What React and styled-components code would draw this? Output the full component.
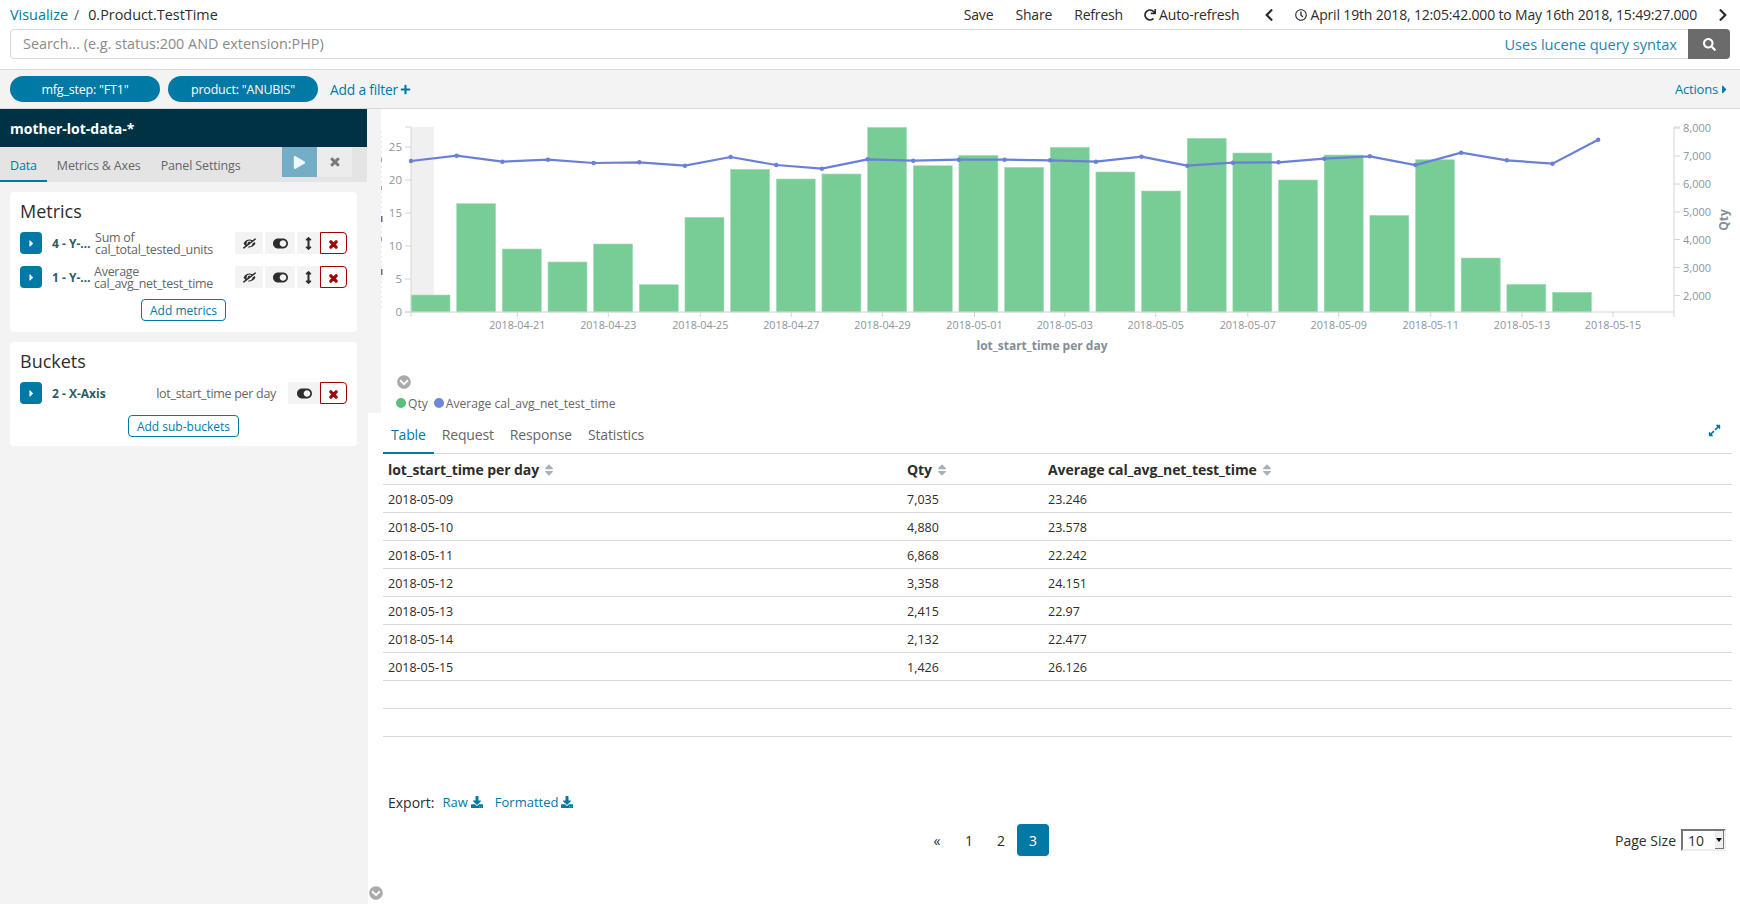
import React from "react"
import styled, { createGlobalStyle } from "styled-components"
import {
  FaArrowsAltV,
  FaCaretRight,
  FaChevronCircleDown,
  FaChevronLeft,
  FaChevronRight,
  FaDownload,
  FaExpandAlt,
  FaEyeSlash,
  FaPlay,
  FaPlus,
  FaRedo,
  FaRegClock,
  FaSearch,
  FaSort,
  FaTimes,
  FaToggleOn,
} from "react-icons/fa"

const GlobalStyle = createGlobalStyle`
  html, body { margin: 0; padding: 0; background: #fff; }
  body {
    font-family: "Open Sans", "Noto Sans", sans-serif;
    font-size: 14px;
    color: #2d2d2d;
    overflow: hidden;
  }
  * { box-sizing: border-box; }
`

const Page = styled.div`
  position: relative;
  width: 1740px;
  height: 904px;
  overflow: hidden;
`

const TopBar = styled.div`
  display: flex;
  align-items: center;
  height: 29px;
  padding: 0 10px;
  font-size: 14px;
`

const Crumb = styled.a`
  color: #0079a5;
  font-size: 14.4px;
`

const CrumbSep = styled.span`
  margin: 0 9px 0 6px;
  color: #555;
`

const CrumbTitle = styled.span`
  font-size: 14.4px;
`

const TopMenu = styled.div`
  display: flex;
  align-items: center;
  margin-left: auto;
  letter-spacing: -0.17px;
`

const MenuItem = styled.span`
  display: inline-flex;
  align-items: center;
  gap: 3px;
  margin-left: ${(p) => p.$gap}px;
  svg { font-size: ${(p) => p.$icon || 12}px; }
`

const SearchRow = styled.div`
  display: flex;
  height: 30px;
  margin: 0 10px 10px;
`

const SearchBox = styled.div`
  display: flex;
  align-items: center;
  justify-content: space-between;
  flex: 1;
  padding: 0 11px 1px 12px;
  border: 1px solid #d9d9d9;
  border-right: 0;
  border-radius: 4px 0 0 4px;
`

const Placeholder = styled.span`
  color: #8a8a8a;
  font-size: 14.4px;
`

const SyntaxLink = styled.a`
  color: #1a87b0;
  font-size: 14.6px;
`

const SearchButton = styled.button`
  display: flex;
  align-items: center;
  justify-content: center;
  width: 42px;
  border: 0;
  border-radius: 0 4px 4px 0;
  background: #6b6b6b;
  color: #fff;
  font-size: 13px;
`

const FilterBar = styled.div`
  display: flex;
  align-items: center;
  height: 40px;
  padding: 0 9px 0 10px;
  background: #f3f3f3;
  border-top: 1px solid #d9d9d9;
  border-bottom: 1px solid #d9d9d9;
`

const Pill = styled.span`
  display: flex;
  align-items: center;
  justify-content: center;
  width: 150px;
  height: 26px;
  margin-right: 8px;
  border-radius: 13px;
  background: #0079a5;
  color: #fff;
  font-size: 12.5px;
  letter-spacing: -0.2px;
`

const AddFilter = styled.a`
  display: inline-flex;
  align-items: center;
  gap: 2px;
  margin-left: 4px;
  padding-top: 1px;
  color: #0079a5;
  font-size: 13.8px;
  letter-spacing: -0.2px;
  svg { font-size: 11px; }
`

const Actions = styled.a`
  display: inline-flex;
  align-items: center;
  margin-left: auto;
  color: #0079a5;
  font-size: 13px;
  letter-spacing: -0.2px;
`

const Body = styled.div`
  display: flex;
  height: 795px;
`

const Sidebar = styled.aside`
  flex: 0 0 368px;
  min-width: 0;
  background: #f3f3f3;
`

const IndexHeader = styled.div`
  display: flex;
  align-items: center;
  width: 367px;
  height: 38px;
  padding-left: 10px;
  background: #003246;
  color: #fff;
  font-size: 14px;
  font-weight: 700;
`

const SideTabs = styled.div`
  display: flex;
  width: 367px;
  height: 35px;
  background: #e4e4e4;
`

const SideTab = styled.span`
  height: 35px;
  padding: 10px 10px 0;
  font-size: 12.5px;
  letter-spacing: -0.15px;
  color: ${(p) => (p.$active ? "#0079a5" : "#666")};
  border-bottom: 2px solid ${(p) => (p.$active ? "#0079a5" : "transparent")};
`

const PlayButton = styled.button`
  display: flex;
  align-items: center;
  justify-content: center;
  width: 35px;
  height: 30px;
  margin-left: auto;
  border: 0;
  background: #74aec6;
  color: #f0f6f9;
  font-size: 13px;
`

const DiscardButton = styled(PlayButton)`
  margin: 0 15px 0 0;
  background: #ececec;
  color: #777;
  font-size: 12px;
  svg { stroke: currentColor; stroke-width: 40; }
`

const Card = styled.section`
  margin: ${(p) => p.$top}px 11px 0 10px;
  padding: 6px 10px 11px;
  height: ${(p) => p.$height}px;
  background: #fff;
  border-radius: 4px;
`

const CardTitle = styled.h3`
  margin: 0 0 8px;
  height: 26px;
  font-size: 18px;
  font-weight: 400;
  line-height: 26px;
`

const AggRow = styled.div`
  display: flex;
  align-items: center;
  height: 22px;
  margin-bottom: 12px;
`

const Expander = styled.button`
  display: flex;
  align-items: center;
  justify-content: center;
  flex: none;
  width: 22px;
  height: 22px;
  padding: 0;
  border: 0;
  border-radius: 4px;
  background: #0079a5;
  color: #fff;
  font-size: 11px;
`

const AggLabel = styled.span`
  flex: none;
  width: ${(p) => p.$width}px;
  margin-left: 10px;
  overflow: hidden;
  white-space: nowrap;
  text-overflow: ellipsis;
  color: #2f5a69;
  font-size: 12px;
  font-weight: 700;
`

const AggDesc = styled.span`
  margin-left: auto;
  margin-right: ${(p) => p.$right}px;
  padding-top: 2px;
  color: #666;
  font-size: 12.5px;
  line-height: 12px;
  letter-spacing: -0.3px;
  white-space: nowrap;
`

const AggButton = styled.span`
  display: flex;
  align-items: center;
  justify-content: center;
  flex: none;
  width: ${(p) => p.$width}px;
  height: 22px;
  margin-right: ${(p) => p.$gap || 0}px;
  background: #f3f3f3;
  color: #2d2d2d;
  font-size: ${(p) => p.$size || 13}px;
  &:first-of-type { border-radius: 4px 0 0 4px; }
`

const EyeIcon = styled(FaEyeSlash)`
  transform: scaleX(-1);
`

const RemoveButton = styled.span`
  display: flex;
  align-items: center;
  justify-content: center;
  flex: none;
  width: 27px;
  height: 22px;
  padding-top: 3px;
  border: 1px solid #a30000;
  border-radius: 0 4px 4px 0;
  color: #a30000;
  font-size: 11px;
  svg { stroke: currentColor; stroke-width: 50; }
`

const CardFooter = styled.div`
  display: flex;
  justify-content: center;
  margin-top: -1px;
`

const OutlineButton = styled.button`
  height: 22px;
  padding: 1px ${(p) => p.$pad}px 0;
  border: 1px solid #0079a5;
  border-radius: 4px;
  background: #fff;
  color: #0079a5;
  font-family: inherit;
  font-size: 12px;
`

const Main = styled.main`
  flex: 1;
  min-width: 0;
`

const ChartPanel = styled.div`
  height: 304px;
  border-left: 13px solid #f3f3f3;
  svg { display: block; }
`

const ChartChevron = styled.div`
  display: flex;
  height: 14px;
  margin: 13px 0 0 16px;
  color: #aaa;
  font-size: 14px;
`

const Legend = styled.div`
  display: flex;
  align-items: center;
  height: 16px;
  margin: 6px 0 0 15px;
  color: #666;
  font-size: 12.1px;
`

const LegendDot = styled.span`
  width: 10px;
  height: 10px;
  margin: 0 2px 0 ${(p) => p.$gap}px;
  border-radius: 50%;
  background: ${(p) => p.$color};
`

const Lower = styled.div`
  padding: 0 8px 0 15px;
`

const TabBar = styled.div`
  position: relative;
  display: flex;
  height: 41px;
  border-bottom: 1px solid #d9d9d9;
`

const Tab = styled.span`
  height: 41px;
  padding: 12px 8px 0;
  font-size: 14px;
  letter-spacing: -0.15px;
  color: ${(p) => (p.$active ? "#0079a5" : "#666")};
  border-bottom: 2px solid ${(p) => (p.$active ? "#0079a5" : "transparent")};
`

const ExpandIcon = styled.span`
  position: absolute;
  top: 10px;
  right: 11px;
  color: #0079a5;
  font-size: 13px;
`

const Table = styled.div`
  display: flex;
  flex-direction: column;
`

const Row = styled.div`
  display: grid;
  grid-template-columns: 519px 141px 1fr;
  align-items: center;
  height: ${(p) => p.$height || 28}px;
  padding: 1px 0 0 5px;
  border-bottom: 1px solid #d9d9d9;
  font-size: 12.5px;
`

const HeadCell = styled.span`
  display: flex;
  align-items: center;
  gap: 3px;
  font-size: 14px;
  font-weight: 700;
  letter-spacing: -0.08px;
  svg { color: #a8b0b8; font-size: 14px; }
`

const Export = styled.div`
  display: flex;
  align-items: center;
  height: 20px;
  margin: 55px 0 0 5px;
`

const ExportLink = styled.a`
  display: inline-flex;
  align-items: center;
  gap: 3px;
  margin-left: ${(p) => p.$gap}px;
  color: #0079a5;
  font-size: 13px;
  svg { font-size: 12px; }
`

const Pager = styled.div`
  display: flex;
  align-items: center;
  height: 32px;
  margin-top: 12px;
`

const Pages = styled.div`
  display: flex;
  align-items: center;
  margin-left: 538px;
`

const PageNum = styled.span`
  display: flex;
  align-items: center;
  justify-content: center;
  width: 32px;
  height: 32px;
  border-radius: 4px;
  background: ${(p) => (p.$active ? "#0079a5" : "transparent")};
  color: ${(p) => (p.$active ? "#fff" : "#2d2d2d")};
  font-size: 14px;
`

const PageSize = styled.div`
  display: flex;
  align-items: center;
  gap: 5px;
  margin: 0 6px 0 auto;
  font-size: 14px;
`

const SizeSelect = styled.span`
  position: relative;
  display: flex;
  align-items: center;
  width: 45px;
  height: 22px;
  padding-left: 5px;
  border: 2px solid;
  border-color: #767676 #eee #eee #767676;
  font-size: 14px;
`

const SizeArrow = styled.span`
  position: absolute;
  top: 0;
  right: 0;
  width: 9px;
  height: 18px;
  background: #eee;
  border-right: 1px solid #767676;
  border-bottom: 1px solid #767676;
  &::after {
    content: "";
    position: absolute;
    top: 7px;
    left: 1px;
    border: 3px solid transparent;
    border-top: 4px solid #000;
  }
`

const BottomChevron = styled.span`
  position: absolute;
  left: 369px;
  top: 886px;
  color: #aaa;
  font-size: 14px;
  line-height: 14px;
`

// top edge of each daily bar, in page pixels
const BAR_TOPS = [
  295, 203.7, 249, 262, 244, 284.7, 217.3, 169.3, 179, 174, 127.3, 165.7, 155.3,
  167.3, 147.3, 172, 191, 138.3, 153, 180, 155, 215.3, 159.7, 258, 284.3, 292.3,
]
const LINE_YS = [
  161, 155.7, 161.7, 159.7, 163, 162.3, 165.7, 157, 165, 168.7, 159.3, 160.7, 159.7,
  159.7, 160.3, 161.7, 156.7, 165.7, 162.7, 162.3, 158.7, 156.3, 165, 152.7, 160.3,
  163.7, 139.7,
]
const LEFT_TICKS = [
  ["25", 147],
  ["20", 180],
  ["15", 213],
  ["10", 246],
  ["5", 279],
  ["0", 312],
]
const RIGHT_TICKS = [
  ["8,000", 128],
  ["7,000", 156],
  ["6,000", 184],
  ["5,000", 212],
  ["4,000", 239.5],
  ["3,000", 267.5],
  ["2,000", 295.5],
]
const X_TICKS = [
  ["2018-04-21", 517.3],
  ["2018-04-23", 608.3],
  ["2018-04-25", 700.3],
  ["2018-04-27", 791.3],
  ["2018-04-29", 882.4],
  ["2018-05-01", 974.5],
  ["2018-05-03", 1064.8],
  ["2018-05-05", 1155.7],
  ["2018-05-07", 1247.8],
  ["2018-05-09", 1338.7],
  ["2018-05-11", 1430.7],
  ["2018-05-13", 1522],
  ["2018-05-15", 1613],
]
const AXIS = "#d4d4d4"
const LABEL = "#8d949b"
const pointX = (i) => 411 + 45.66 * i

const Chart = () => (
  <svg width="1359" height="253" viewBox="381 109 1359 253">
    <rect x="411" y="127" width="23" height="185" fill="#f0f0f0" />
    {BAR_TOPS.map((top, i) => (
      <rect
        key={i}
        x={pointX(i)}
        y={top}
        width="39"
        height={312 - top}
        fill="#78cd96"
        stroke="#a6deba"
        strokeWidth="0.6"
      />
    ))}
    {/* what is left of the clipped left axis title */}
    <path d="M381.5 131V310" stroke="#d8eef4" strokeDasharray="2 3" />
    <path d="M381.5 158v4M381.5 186v4M381.5 237v4" stroke="#9aa5b0" />
    <path d="M381.5 216v6M381.5 269v6" stroke="#5f6f80" strokeWidth="2" />
    <path
      d={`M405 127h6v185h-6M411 312H1674M1674 127h6M1674 127V317M411 312v5`}
      fill="none"
      stroke={AXIS}
    />
    {LEFT_TICKS.map(([label, y]) => (
      <g key={label}>
        <path d={`M405 ${y}h6`} stroke={AXIS} />
        <text x="402" y={y + 4} textAnchor="end" fontSize="11.5" fill={LABEL}>
          {label}
        </text>
      </g>
    ))}
    {RIGHT_TICKS.map(([label, y]) => (
      <g key={label}>
        <path d={`M1674 ${y}h6`} stroke={AXIS} />
        <text x="1683" y={y + 4} fontSize="11" fill={LABEL}>
          {label}
        </text>
      </g>
    ))}
    {X_TICKS.map(([label, x]) => (
      <g key={label}>
        <path d={`M${x} 312v5`} stroke={AXIS} />
        <text x={x} y="329" textAnchor="middle" fontSize="10.8" fill={LABEL}>
          {label}
        </text>
      </g>
    ))}
    <text x="1042" y="350" textAnchor="middle" fontSize="12" fontWeight="700" fill="#848e96">
      lot_start_time per day
    </text>
    <text
      x="1725"
      y="220"
      textAnchor="middle"
      fontSize="12"
      fontWeight="700"
      fill="#848e96"
      transform="rotate(-90 1725 220)"
      dominantBaseline="middle"
    >
      Qty
    </text>
    <polyline
      points={LINE_YS.map((y, i) => `${pointX(i)},${y}`).join(" ")}
      fill="none"
      stroke="#6a80d8"
      strokeWidth="2.2"
    />
    {LINE_YS.map((y, i) => (
      <circle key={i} cx={pointX(i)} cy={y} r="2.2" fill="#6a80d8" />
    ))}
  </svg>
)

const ROWS = [
  ["2018-05-09", "7,035", "23.246"],
  ["2018-05-10", "4,880", "23.578"],
  ["2018-05-11", "6,868", "22.242"],
  ["2018-05-12", "3,358", "24.151"],
  ["2018-05-13", "2,415", "22.97"],
  ["2018-05-14", "2,132", "22.477"],
  ["2018-05-15", "1,426", "26.126"],
]

const MetricRow = ({ label, line1, line2 }) => (
  <AggRow>
    <Expander>
      <FaCaretRight />
    </Expander>
    <AggLabel $width={41}>{label}</AggLabel>
    <AggDesc $right={22}>
      {line1}
      <br />
      {line2}
    </AggDesc>
    <AggButton $width={28} $gap={2}>
      <EyeIcon />
    </AggButton>
    <AggButton $width={30} $gap={2} $size={15}>
      <FaToggleOn />
    </AggButton>
    <AggButton $width={23}>
      <FaArrowsAltV />
    </AggButton>
    <RemoveButton>
      <FaTimes />
    </RemoveButton>
  </AggRow>
)

const App = () => (
  <Page>
    <GlobalStyle />
    <TopBar>
      <Crumb>Visualize</Crumb>
      <CrumbSep>/</CrumbSep>
      <CrumbTitle>0.Product.TestTime</CrumbTitle>
      <TopMenu>
        <MenuItem $gap={0}>Save</MenuItem>
        <MenuItem $gap={22}>Share</MenuItem>
        <MenuItem $gap={22}>Refresh</MenuItem>
        <MenuItem $gap={21}>
          <FaRedo />
          Auto-refresh
        </MenuItem>
        <MenuItem $gap={23} $icon={14}>
          <FaChevronLeft />
        </MenuItem>
        <MenuItem $gap={19}>
          <FaRegClock />
          April 19th 2018, 12:05:42.000 to May 16th 2018, 15:49:27.000
        </MenuItem>
        <MenuItem $gap={19} $icon={14}>
          <FaChevronRight />
        </MenuItem>
      </TopMenu>
    </TopBar>
    <SearchRow>
      <SearchBox>
        <Placeholder>Search... (e.g. status:200 AND extension:PHP)</Placeholder>
        <SyntaxLink>Uses lucene query syntax</SyntaxLink>
      </SearchBox>
      <SearchButton>
        <FaSearch />
      </SearchButton>
    </SearchRow>
    <FilterBar>
      <Pill>mfg_step: "FT1"</Pill>
      <Pill>product: "ANUBIS"</Pill>
      <AddFilter>
        Add a filter
        <FaPlus />
      </AddFilter>
      <Actions>
        Actions
        <FaCaretRight />
      </Actions>
    </FilterBar>
    <Body>
      <Sidebar>
        <IndexHeader>mother-lot-data-*</IndexHeader>
        <SideTabs>
          <SideTab $active>Data</SideTab>
          <SideTab>Metrics &amp; Axes</SideTab>
          <SideTab>Panel Settings</SideTab>
          <PlayButton>
            <FaPlay />
          </PlayButton>
          <DiscardButton>
            <FaTimes />
          </DiscardButton>
        </SideTabs>
        <Card $top={10} $height={140}>
          <CardTitle>Metrics</CardTitle>
          <MetricRow label="4 - Y-Axis" line1="Sum of" line2="cal_total_tested_units" />
          <MetricRow label="1 - Y-Axis" line1="Average" line2="cal_avg_net_test_time" />
          <CardFooter>
            <OutlineButton $pad={8}>Add metrics</OutlineButton>
          </CardFooter>
        </Card>
        <Card $top={10} $height={104}>
          <CardTitle>Buckets</CardTitle>
          <AggRow>
            <Expander>
              <FaCaretRight />
            </Expander>
            <AggLabel $width={70}>2 - X-Axis</AggLabel>
            <AggDesc $right={12}>lot_start_time per day</AggDesc>
            <AggButton $width={32} $size={15}>
              <FaToggleOn />
            </AggButton>
            <RemoveButton>
              <FaTimes />
            </RemoveButton>
          </AggRow>
          <CardFooter>
            <OutlineButton $pad={8}>Add sub-buckets</OutlineButton>
          </CardFooter>
        </Card>
      </Sidebar>
      <Main>
        <ChartPanel>
          <Chart />
          <ChartChevron>
            <FaChevronCircleDown />
          </ChartChevron>
          <Legend>
            <LegendDot $color="#57c17b" $gap={0} />
            Qty
            <LegendDot $color="#6f87d8" $gap={6} />
            Average cal_avg_net_test_time
          </Legend>
        </ChartPanel>
        <Lower>
          <TabBar>
            <Tab $active>Table</Tab>
            <Tab>Request</Tab>
            <Tab>Response</Tab>
            <Tab>Statistics</Tab>
            <ExpandIcon>
              <FaExpandAlt />
            </ExpandIcon>
          </TabBar>
          <Table>
            <Row $height={31}>
              <HeadCell>
                lot_start_time per day <FaSort />
              </HeadCell>
              <HeadCell>
                Qty <FaSort />
              </HeadCell>
              <HeadCell>
                Average cal_avg_net_test_time <FaSort />
              </HeadCell>
            </Row>
            {ROWS.map((row) => (
              <Row key={row[0]}>
                <span>{row[0]}</span>
                <span>{row[1]}</span>
                <span>{row[2]}</span>
              </Row>
            ))}
            <Row />
            <Row />
          </Table>
          <Export>
            Export:
            <ExportLink $gap={8}>
              Raw
              <FaDownload />
            </ExportLink>
            <ExportLink $gap={12}>
              Formatted
              <FaDownload />
            </ExportLink>
          </Export>
          <Pager>
            <Pages>
              <PageNum>«</PageNum>
              <PageNum>1</PageNum>
              <PageNum>2</PageNum>
              <PageNum $active>3</PageNum>
            </Pages>
            <PageSize>
              Page Size
              <SizeSelect>
                10
                <SizeArrow />
              </SizeSelect>
            </PageSize>
          </Pager>
        </Lower>
      </Main>
    </Body>
    <BottomChevron>
      <FaChevronCircleDown />
    </BottomChevron>
  </Page>
)

export default App
